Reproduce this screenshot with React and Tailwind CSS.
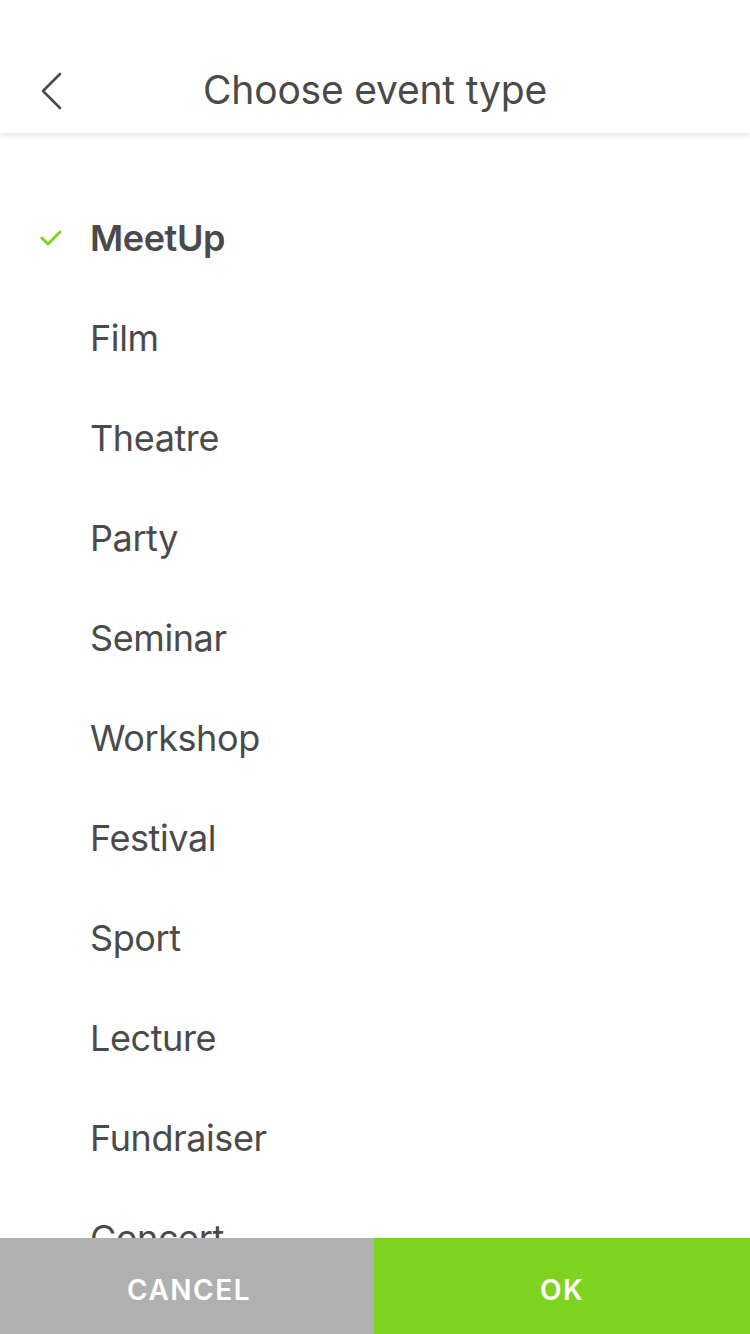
const TYPES = [
  'MeetUp', 'Film', 'Theatre', 'Party', 'Seminar', 'Workshop',
  'Festival', 'Sport', 'Lecture', 'Fundraiser', 'Concert',
]

function BackIcon() {
  return (
    <svg width="24" height="40" viewBox="0 0 24 40" fill="none">
      <path d="M21 3 L4 20 L21 37" stroke="#4a4a4a" strokeWidth="2.6" strokeLinecap="round" strokeLinejoin="round" />
    </svg>
  )
}

function CheckIcon() {
  return (
    <svg width="22" height="16" viewBox="0 0 22 16" fill="none">
      <path d="M2 8 L8 14 L20 2" stroke="#7ed321" strokeWidth="3" strokeLinecap="round" strokeLinejoin="round" />
    </svg>
  )
}

export default function App() {
  const selected = 'MeetUp'

  return (
    <div className="h-[1334px] w-[750px] flex flex-col bg-white text-[#4a4a4a] font-['Inter',sans-serif] overflow-hidden">
      {/* Header */}
      <div className="pt-10 bg-white shadow-[0_2px_6px_rgba(0,0,0,0.12)] z-10 relative">
        <div className="h-[93px] flex items-center px-[39px] pt-2">
          <BackIcon />
          <h1 className="flex-1 text-center text-[39px] font-normal tracking-[-0.2px] pr-6">Choose event type</h1>
        </div>
      </div>

      {/* List */}
      <div className="flex-1 overflow-hidden pt-[55px]">
        {TYPES.map(t => (
          <div key={t} className="h-[100px] flex items-center">
            <div className="w-[90px] flex justify-start pl-[40px]">
              {t === selected && <CheckIcon />}
            </div>
            <span className={`text-[36px] tracking-[-0.4px] ${t === selected ? 'font-semibold' : 'font-normal'}`}>{t}</span>
          </div>
        ))}
      </div>

      {/* Bottom buttons */}
      <div className="h-[96px] flex">
        <button className="w-[374px] bg-[#b0b0b0] text-white text-[28px] font-semibold tracking-[1.5px] pt-2 pl-1">CANCEL</button>
        <button className="flex-1 bg-[#7ed321] text-white text-[28px] font-semibold tracking-[1.5px] pt-2">OK</button>
      </div>
    </div>
  )
}
